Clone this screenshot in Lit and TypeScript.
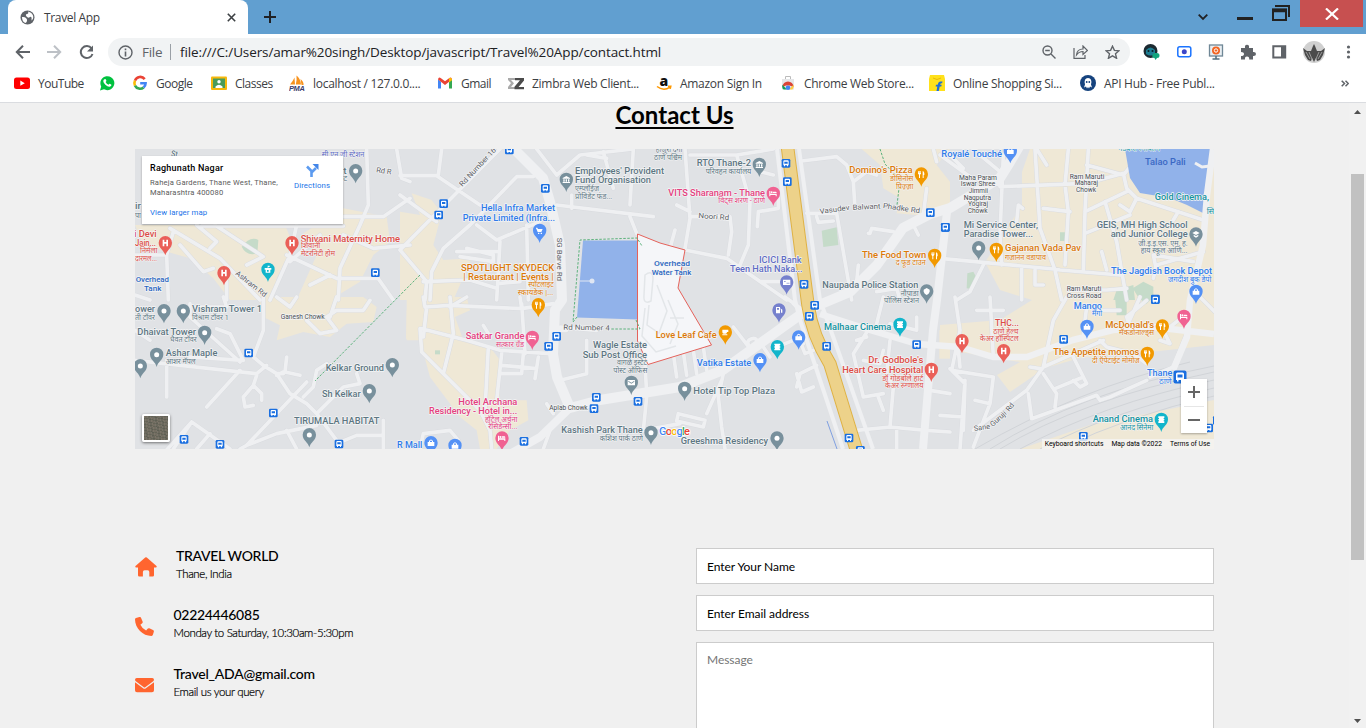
import { LitElement, html, css, svg } from "lit";
import { customElement } from "lit/decorators.js";

type Label = [number, number, string, number, string, number?];
type Pin = [number, number, string, string];
interface Sheet {
  x: number;
  y: number;
  beige?: string;
  green?: string;
  roads: string;
  labels: Label[];
  pins: Pin[];
  stops: [number, number][];
}

const GREY = "#78909c", RED = "#ea5f58", TEAL = "#12b5cb", BLUE = "#5491f5", ORANGE = "#f29900", PINK = "#f06292", VIOLET = "#7580cd";

// Every sheet is surveyed at three units per screen pixel.
const SHEETS: Sheet[] = [
  {
    x: 130, y: 145,
    beige: "M15 240H465L490 300 440 400 430 465H300L250 400 180 340 40 300ZM520 265L640 190 770 215 780 290 730 330 690 410 600 465H500L560 330Z",
    green: "M335 305Q360 272 385 285L382 325Q350 335 335 305Z",
    roads: "M215 243H640M640 215H760L840 160M710 12L715 180 690 240 630 370 625 465M500 240L480 330 420 465M120 250L270 340 390 465M255 240L400 335 350 360M130 260L110 330 115 465M290 410V465M470 330L620 400 740 400M570 270L480 350M15 330H110M640 270L730 310 840 300M150 300L220 380 250 370M800 12L815 100 840 110M730 380L790 465M200 240L260 290 240 310M15 450L60 465M540 420L600 390",
    labels: [
      [122, 34, "St", 20, "g", 8], [12, 275, "i Devi", 68, "r"], [15, 303, "Jain...", 63, "r"],
      [30, 325, "निर्मला", 52, "r s"], [15, 348, "दारमल...", 66, "r s"], [15, 192, "ir", 18, "g"], [15, 218, "पा", 18, "g s"],
      [512, 290, "Shivani Maternity Home", 298, "r"], [513, 309, "शिवानी", 58, "r s"], [513, 333, "मेटरनिटी होम", 102, "r s"],
      [17, 410, "Overhead", 100, "n"], [42, 438, "Tank", 52, "n"], [315, 388, "Ashram Rd", 112, "d", 38], [738, 82, "Rd R", 46, "d", 8],
      [575, 37, "सी.एन.जी स्टेशन", 128, "v s"], [640, 86, "t", 10, "g"], [640, 108, "ट", 12, "g s"],
    ],
    pins: [[106, 330, RED, "H"], [486, 330, RED, "H"], [282, 420, RED, "H"], [414, 410, TEAL, "u"], [677, 114, GREY, "o"]],
    stops: [[736, 383]],
  },
  {
    x: 400, y: 145,
    beige: "M35 145L95 165 125 205 100 300 130 345 215 340 160 465H0V200L60 210Z",
    roads: "M0 92H110L240 180M125 12L115 90M0 150L110 230M300 12L0 315M400 95L350 95 210 240 130 310 95 380 90 465M410 12L470 90M470 90L540 30 700 12M470 180L760 215M690 215L710 265M690 180L700 12M515 150V190M230 240L290 285 420 230M300 290L290 465M380 240L385 465M70 410L210 405 290 430M170 320H290M200 310L280 330V350L180 335M610 20L640 130M0 315L80 410 75 465M560 30L620 40M300 415L360 410",
    labels: [
      [187, 126, "Rd Number 16", 150, "d", -47], [525, 86, "Employees' Provident", 267, "g"], [525, 114, "Fund Organisation", 228, "g"],
      [525, 137, "एम्प्लॉईज", 72, "g s"], [525, 161, "प्रोविडेंट फंड...", 112, "g s"],
      [243, 199, "Hella Infra Market", 222, "b"], [188, 227, "Private Limited (Infra...", 277, "b"],
      [471, 278, "SG Barve Rd", 130, "d", 90], [183, 377, "SPOTLIGHT SKYDECK", 280, "o"], [190, 405, "| Restaurant | Events |", 271, "o"],
      [385, 427, "स्पॉटलाइट", 76, "o s"], [353, 451, "स्कायडेक |...", 107, "o s"],
      [762, 363, "Overhead", 108, "n"], [755, 390, "Water Tank", 119, "n"],
      [767, 22, "हाजूरी दर्गा", 80, "g s"], [762, 44, "ठाणे पश्चिम", 84, "g s"], [805, 152, "VITS Sharanam - Thane", 290, "p"],
    ],
    pins: [[499, 140, GREY, "b"], [419, 293, BLUE, "c"], [415, 516, ORANGE, "f"]],
    stops: [[328, 15], [436, 130], [131, 176], [116, 210]],
  },
  {
    x: 670, y: 145,
    beige: "M575 12H840L800 60 840 110 840 190 740 210 680 205 690 160 640 130 630 60Z",
    green: "M455 257L500 247 505 300 460 306Z",
    roads: "M45 12L60 220 45 310M60 215L180 215 185 260 175 330M45 315L170 340 350 465M210 360L235 300 240 170 200 30 60 30M200 30L310 12M310 90L270 80M325 160V190L265 200 262 245M395 48L500 35 530 60 550 110 555 190M550 110L590 80 620 90M410 205L500 205 545 465M440 215L445 232 490 228M595 265H600L605 250 670 260M270 410H350M560 410L565 360M730 240L745 270M770 130L760 210M790 12L800 50M20 180L60 200M0 310L15 255M620 440L680 430 690 465",
    labels: [
      [80, 62, "RTO Thane-2", 163, "g"], [107, 86, "परिवहन कार्यालय", 137, "g s"], [145, 174, "विट्स शरण - ठाणे", 140, "p s"],
      [85, 219, "Noori Rd", 92, "d", 4], [538, 85, "Domino's Pizza", 190, "o"], [660, 109, "डोमिनोस", 70, "o s"], [678, 131, "पिज़्ज़ा", 52, "o s"],
      [450, 207, "Vasudev", 90, "d", -8], [548, 195, "Balwant", 84, "d", -3], [638, 189, "Phadke Rd", 112, "d", 8],
      [576, 338, "The Food Town", 193, "o"], [677, 361, "द फूड टाउन", 90, "o s"],
      [267, 354, "ICICI Bank", 128, "v"], [180, 382, "Teen Hath Naka...", 218, "v"], [457, 430, "Naupada Police Station", 288, "g"],
      [692, 453, "नौपाडा", 54, "g s"], [642, 475, "पोलिस स्टेशन", 105, "g s"],
    ],
    pins: [[268, 95, GREY, "b"], [310, 182, PINK, "h"], [754, 124, ORANGE, "f"], [794, 368, ORANGE, "f"], [350, 448, VIOLET, "k"], [770, 475, GREY, "p"]],
    stops: [[348, 55], [352, 110], [402, 418], [781, 203], [826, 247]],
  },
  {
    x: 940, y: 145,
    green: "M360 262H378V288H360ZM82 385L100 380 108 395 95 432 80 430ZM578 430L610 410 640 425 640 465H600ZM530 435L580 420 585 465H520Z",
    roads: "M0 340L340 372 360 375 540 390M285 12L300 250 345 375 365 465M385 12L375 120 385 200 375 360M445 12L435 200 430 380M180 125L440 115 550 85M550 85L560 130 590 160 790 225M435 200L560 140M495 170L530 290 560 465M590 160L570 200 540 180M435 265L570 210M130 360L90 440 50 465M230 230L235 180 248 190M190 30L180 270 185 360M245 370V465M440 60L550 90M385 435H500L560 430M285 375V420H310M650 380L640 330 760 350M700 225L715 200M390 200L310 190M600 30L550 90M0 30L90 95 180 120M485 320L500 375M640 400L650 360 790 320M320 60L290 12M20 20L70 70M120 30L180 80",
    labels: [
      [4, 35, "Royalé Touché", 182, "b"], [57, 104, "Maha Param", 114, "k"], [62, 124, "Iswar Shree", 104, "k"], [86, 144, "Jimmii", 58, "k"],
      [71, 164, "Nagputra", 82, "k"], [84, 184, "Yogiraj", 60, "k"], [83, 204, "Chowk", 60, "k"],
      [389, 101, "Ram Maruti", 104, "k"], [404, 120, "Maharaj", 70, "k"], [408, 140, "Chowk", 60, "k"],
      [615, 59, "Talao Pali", 122, "w"], [644, 165, "Gold Cinema,", 163, "t"], [800, 208, "सि", 22, "t s"], [535, 18, "गडकरी रंगायतन", 125, "t s"],
      [71, 249, "Mi Service Center,", 223, "g"], [71, 277, "Paradise Tower...", 208, "g"], [195, 319, "Gajanan Vada Pav", 228, "o"], [195, 344, "गजानन वडापाव", 123, "o s"],
      [470, 249, "GEIS, MH High School", 273, "g"], [512, 277, "and Junior College", 231, "g"], [595, 303, "जी.इ.इ.एस. एम. ह.", 148, "g s"], [602, 325, "हाय स्कूल आणि...", 140, "g s"],
      [513, 388, "The Jagdish Book Depot", 303, "b"], [684, 412, "जगदीश बुक डेपो", 130, "b s"],
      [380, 438, "Ram Maruti", 104, "k"], [380, 458, "Cross Road", 104, "k"],
    ],
    pins: [[211, 54, BLUE, "g"], [116, 345, GREY, "o"], [169, 350, ORANGE, "f"], [768, 304, GREY, "e"], [768, 476, BLUE, "g"]],
    stops: [[16, 247], [646, 462]],
  },
  {
    x: 130, y: 297,
    beige: "M385 0L400 60 450 85 440 130 520 105 600 120 650 80 730 75 740 30 700 0ZM830 40H840V125H828Z",
    roads: "M180 20V60L330 195M280 0L290 30 200 30M400 0L400 100 370 180 400 205 440 230 480 290 530 320 560 350 620 430M15 190L380 230 410 205M110 190V300M180 180L340 190M260 95L300 110 340 190M330 220L230 330M380 235L370 265 340 300 345 330 370 325M370 265L395 290V310M530 255L350 445 330 456M470 180L465 225 510 235M460 230L440 230M460 225L440 235M560 350L640 270 690 260 680 230M520 300L550 270 560 220 590 200M130 456L185 375 300 456M185 375L100 470M240 410L200 456M350 445L440 410 560 385M470 400L500 456M620 440L680 415H760M760 370V456M590 60L620 100 570 110 530 70M590 60L620 40 700 40 720 10M620 0L600 60M440 0L480 30 500 0M15 100L60 130",
    labels: [
      [15, 46, "ower", 60, "g"], [15, 69, "ती टॉवर", 60, "g s"], [186, 46, "Vishram Tower 1", 210, "g"], [186, 69, "विश्राम टॉवर 1", 110, "g s"],
      [22, 113, "Dhaivat Tower", 176, "g"], [120, 136, "धैवत टॉवर", 80, "g s"], [107, 178, "Ashar Maple", 155, "g"], [107, 201, "आशर मॅपल", 90, "g s"],
      [452, 66, "Ganesh Chowk", 132, "k"], [587, 221, "Kelkar Ground", 175, "g"], [576, 299, "Sh Kelkar", 116, "g"], [492, 382, "TIRUMALA HABITAT", 256, "g"],
      [801, 453, "R Mall", 76, "b"],
    ],
    pins: [[102, 78, GREY, "o"], [160, 78, GREY, "o"], [224, 143, GREY, "o"], [80, 209, GREY, "o"], [31, 243, GREY, "o"], [787, 240, GREY, "o"], [718, 318, GREY, "o"], [538, 450, GREY, "o"]],
    stops: [[356, 168], [430, 348], [162, 427], [270, 442], [627, 441]],
  },
  {
    x: 400, y: 297,
    beige: "M20 0H200L210 40 165 60 190 130 270 150 300 190 300 310 380 310 385 370 330 400 290 456H240L230 400 180 360 90 240 60 130 20 130Z",
    green: "M105 160H120V172H105Z",
    roads: "M70 0L75 30 150 25 370 35M150 0L160 110 130 230M65 95L200 130 300 160 450 170M60 95L65 165 240 340 270 400 275 456M250 85L265 110M265 150L255 340M375 170L365 20M305 170L290 310M305 205L410 215M305 230L365 230 370 170M415 180L405 245M480 250L560 230V130M440 320L460 350M470 100H500M360 0L365 35 460 20M60 456L70 410 150 400 175 430M740 300L730 400 840 380M430 456L450 400M735 200L740 290M590 100L480 90M70 120L80 30M150 30L200 0",
    labels: [
      [490, 98, "Rd Number 4", 139, "d", 1], [197, 126, "Satkar Grande", 176, "p"], [288, 150, "सत्कार ग्रँड", 84, "p s"],
      [579, 154, "Wagle Estate", 162, "g"], [548, 182, "Sub Post Office", 193, "g"], [651, 205, "वागळे इस्टेट", 90, "g s"], [640, 228, "पोस्ट ऑफिस", 102, "g s"],
      [175, 323, "Hotel Archana", 177, "p"], [87, 351, "Residency - Hotel in...", 265, "p"], [255, 375, "हॉटेल अर्चना", 97, "p s"], [265, 397, "रेसिडेन्सी...", 87, "p s"],
      [448, 340, "Aplab Chowk", 115, "k"], [484, 407, "Kashish Park Thane", 244, "g"], [599, 431, "कशिश पार्क ठाणे", 130, "g s"],
      [767, 124, "Love Leaf Cafe", 183, "o"],
    ],
    pins: [[397, 158, PINK, "h"], [694, 293, GREY, "l"], [753, 443, GREY, "o"], [306, 460, PINK, "h"], [93, 474, BLUE, "g"], [165, 482, BLUE, "g"]],
    stops: [[470, 118], [446, 148], [589, 301], [582, 335], [714, 313], [372, 433]],
  },
  {
    x: 670, y: 297,
    beige: "M808 100H840V185H808Z",
    roads: "M190 90L240 155M160 230L145 300 155 390 165 456M155 250L110 350M25 350L105 370 100 390 20 372ZM240 155Q225 130 245 125T265 150M320 150L370 130 400 140M385 120L405 170 430 160M380 270L390 230 440 205M380 230L395 285 430 270M560 130L590 120M600 90L550 170 580 300 640 290M580 190L630 200 640 160M660 130L650 230 670 270 660 390M640 0L620 80M740 60V100L660 80M560 400L660 390 770 400M680 400V456M625 300L640 340M780 280L840 290M770 400L840 405M345 0L400 40M370 20L410 60M280 150L300 180M10 170L20 240M40 165L50 235M70 160L80 230M100 150L110 220",
    labels: [
      [80, 206, "Vatika Estate", 164, "b"], [70, 292, "Hotel Tip Top Plaza", 245, "g"], [32, 440, "Greeshma Residency", 262, "g"],
      [462, 100, "Malhaar Cinema", 202, "t"], [595, 199, "Dr. Godbole's", 165, "r"], [517, 227, "Heart Care Hospital", 243, "r"], [637, 251, "डॉ गोडबोले हार्ट", 123, "r s"], [645, 273, "केअर रुग्णालय", 115, "r s"],
    ],
    pins: [[166, 142, ORANGE, "q"], [327, 76, VIOLET, "a"], [386, 157, BLUE, "g"], [322, 186, TEAL, "m"], [270, 225, BLUE, "g"], [44, 311, GREY, "o"], [690, 119, TEAL, "m"], [784, 254, RED, "H"], [321, 460, GREY, "o"]],
    stops: [[434, 25], [418, 58], [470, 148], [740, 143], [537, 423], [571, 460]],
  },
  {
    x: 940, y: 297,
    green: "M525 0H560V55H530ZM590 0H640L620 20Z",
    roads: "M45 0L60 100 35 220 160 240 150 320 100 450M150 0L160 180M110 40H190M60 210L55 160M105 310L150 320M75 250L60 456M30 215L75 260 70 400M380 0L340 70 310 210 260 280 100 400M310 210L490 130M270 210L300 215M310 230L350 290 345 330M265 290L275 365 470 295 480 310 510 300 620 250M400 180L440 260 420 270 400 250M345 275L430 240M600 0L560 90M440 30L430 110M470 40H540M620 10L560 60 570 90M670 100L690 140 660 130M0 355L70 360M480 130L500 150 580 170 620 200M740 50L690 90M780 0L840 60M740 110L700 210 630 240",
    labels: [
      [165, 86, "THC...", 72, "r"], [160, 110, "ठाणे हेल्थ", 75, "r s"], [119, 132, "केअर हॉस्पिटल", 117, "r s"],
      [401, 35, "Mango", 85, "b"], [456, 58, "मँगो", 30, "b s"], [496, 92, "McDonald's", 146, "o"], [537, 115, "मॅकडोनाल्ड्स", 105, "o s"],
      [340, 173, "The Appetite momos", 258, "o"], [456, 197, "दी ऍपेटाईट मोमोज", 143, "o s"],
      [621, 237, "Thane", 76, "b"], [657, 261, "ठाणे", 38, "b s"], [458, 374, "Anand Cinema", 181, "t"], [540, 398, "आनंद सिनेमा", 100, "t s"],
      [103, 402, "Sane", 48, "d", -8], [158, 390, "Guruji", 58, "d", -42], [208, 345, "Rd", 26, "d", -52],
    ],
    pins: [[66, 168, RED, "H"], [191, 198, RED, "H"], [441, 125, BLUE, "g"], [667, 124, ORANGE, "f"], [732, 95, PINK, "h"], [622, 206, ORANGE, "f"], [664, 404, TEAL, "m"]],
    stops: [[646, 8], [371, 127], [430, 418], [806, 393], [832, 370]],
  },
];

const GLYPHS: Record<string, unknown> = {
  o: svg`<circle r="7.5"/>`,
  H: svg`<path d="M-8-10h5v7h6v-7h5v20h-5v-8h-6v8h-5z"/>`,
  f: svg`<path d="M-9-10h2v6h1v-6h2v6h1v-6h2v8l-3 3v10h-3v-10l-3-3zM4-10q5 1 5 7v5h-2v9h-3z"/>`,
  g: svg`<path d="M-10-3h4v-3q6-9 12 0v3h4v12h-20zM-3-3h6v-3q-3-3-6 0z" fill-rule="evenodd"/>`,
  h: svg`<path d="M-12-8h3v8h19v8h-3v-4h-16v4h-3zM-1-6h8q3 0 3 4h-11z"/><circle cx="-5" cy="-4" r="3"/>`,
  m: svg`<path d="M-9-10h18v5h-2v3h2v4h-2v3h2v5h-18v-5h2v-3h-2v-4h2v-3h-2z"/>`,
  b: svg`<path d="M0-11l11 6v2h-22v-2zM-9-1h4v7h-4zM-2-1h4v7h-4zM5-1h4v7h-4zM-11 7h22v3h-22z"/>`,
  c: svg`<path d="M-11-9h4l2 4h14l-4 9h-11l-4-10h-1zM-5 6h4v4h-4zM3 6h4v4h-4z"/>`,
  e: svg`<path d="M-11-4l11-6 11 6-11 6zM-7 1l7 4 7-4v5l-7 4-7-4z"/>`,
  l: svg`<path fill-rule="evenodd" d="M-11-8h22v16h-22zM-9-6l9 6 9-6v3l-9 6-9-6z"/>`,
  k: svg`<path fill-rule="evenodd" d="M-11-8h22v16h-22zM-8-3h5v2h-5zM0 1h3v3h-3zM5 1h3v3h-3z"/>`,
  u: svg`<path fill-rule="evenodd" d="M-1-12h6v4h-4v3h9v5h-3v9h-14v-9h-3v-5h9zM-3 1h5v5h-5z"/>`,
  q: svg`<path d="M-9-8h18v7h-4q0 5-4 5h-6q-4 0-4-5zM-9 6h15v3h-15z"/>`,
  a: svg`<path fill-rule="evenodd" d="M-9-10h12v19h-12zM-6-7v5h6v-5zM4-6l6 4v9h-4v-7z"/>`,
  p: svg`<path d="M0-10l9 5v6q-2 7-9 10-7-3-9-10v-6z"/>`,
};

const pin = ([x, y, fill, glyph]: Pin) => svg`<g transform="translate(${x} ${y - 36})">
  <path fill=${fill} d="M0 37C-3 22-20 16-20-1A20 20 0 0 1 20-1C20 16 3 22 0 37Z"/><g fill="#fff">${GLYPHS[glyph]}</g></g>`;

const stop = ([x, y]: [number, number]) => svg`<g transform="translate(${x} ${y})">
  <rect x="-13" y="-13" width="26" height="26" rx="4" fill="#1a6fe0"/>
  <path fill="#fff" fill-rule="evenodd" d="M-8-6q0-3 3-3h10q3 0 3 3v12h-2v3h-3v-3h-6v3h-3v-3h-2zM-5-5v6h10v-6z"/></g>`;

const label = ([x, y, text, w, cls, turn]: Label) =>
  svg`<text class=${"t " + cls} transform="translate(${x} ${y}) rotate(${turn ?? 0})" textLength=${w} lengthAdjust="spacingAndGlyphs">${text}</text>`;

const at = (s: Sheet) => `translate(${s.x} ${s.y}) scale(.33333)`;

const map = () => svg`
  <rect x="135" y="149" width="1079" height="300" fill="#e0e2e5"/>
  <g fill="#efe8d6">
    ${SHEETS.map((s) => s.beige ? svg`<path transform=${at(s)} d=${s.beige}/>` : null)}
    <path d="M1022 172L1030 149H1214V345L1150 352 1080 358 1045 368 1010 392 997 375 1020 362 960 352 940 345V325L1000 320 1032 300 1000 290 985 262 1000 240 1022 205ZM1020 449L1090 425 1165 410 1214 400V449Z"/>
  </g>
  <g fill="#c5dbc9">${SHEETS.map((s) => s.green ? svg`<path transform=${at(s)} d=${s.green}/>` : null)}</g>
  <g fill="none" stroke="#d1d4d8" stroke-width="1">
    <path d="M1000 449Q1080 400 1214 372M990 449Q1080 392 1214 366M1020 449Q1100 405 1214 380M1040 449Q1110 412 1214 388M975 449Q1080 388 1190 362M1060 449Q1130 415 1214 396"/>
  </g>
  ${SHEETS.map((s) => svg`<path transform=${at(s)} class="casing" d=${s.roads}/>`)}
  ${SHEETS.map((s) => svg`<path transform=${at(s)} class="road" d=${s.roads}/>`)}
  <g fill="#91b2ea">
    <path d="M583 240.500H637L638 319.500 577 317.500Z"/>
    <path d="M1125 149H1212L1203 213 1187 205 1170 198 1140 193 1130 178Z"/>
    <path d="M580 281h10" stroke="#dfe6f3" stroke-width="1"/><circle cx="592" cy="281" r="2.500" fill="#dfe6f3"/>
    <path d="M1195 163L1202 167 1210 166" fill="none" stroke="#eff0f2" stroke-width="3"/>
  </g>
  <g fill="none" stroke="#eff0f2" stroke-linejoin="round">
    <path stroke-width="10" d="M510 145L543 178 550 202 560 245 562 300 555 310 553 354 557 377 570 408 600 400 680 387 723 370 783 327 807 310 850 292 877 265 903 228 930 214 950 208 1000 178 1010 162 1020 145"/>
    <path stroke-width="8" d="M572 406L540 437 508 455M947 212L937 300 933 330 923 449"/>
    <path stroke-width="6.500" d="M820 314L870 330 917 344 960 347 993 357 1027 357 1073 340 1113 330 1153 327 1214 334M1213 149L1207 195 1203 245 1190 300 1187 337 1173 370"/>
    <path stroke-width="4" d="M777 149L795 300 800 320 843 449M799 149L820 300 845 370 873 449"/>
  </g>
  <path d="M787.500 147L808 305Q812 335 830 364L857 452" fill="none" stroke="#dfb244" stroke-width="13.500"/>
  <path d="M787.500 147L808 305Q812 335 830 364L857 452" fill="none" stroke="#edd28a" stroke-width="11.500"/>
  <path d="M637.500 234L660 243 685 250 678 288 685 300 711.500 345 648 364.500 637.500 341Z" fill="#f5f6f9"/>
  <g fill="none" stroke="#e3e6e9" stroke-width="1.500">
    <path d="M645 275q8-6 8 4l-2 22q-8 4-7-6zM657 285l10 26-8 22-12-8 2-20M668 300l10 24-8 20M645 308l-3 28 14 16 20-6M670 318h14"/>
  </g>
  <path d="M637.500 234L660 243 685 250 678 288 685 300 711.500 345 648 364.500 637.500 341Z" fill="none" stroke="#e5625b" stroke-width="1"/>
  <g fill="none" stroke="#5cb27c" stroke-width="1" stroke-dasharray="2.500 1.500">
    <path d="M577 317L573 322 580 240 637 238 642 246M636 320L640 329H610M420 275L315 381M880 149L885 164 900 180 897 205"/>
  </g>
  <path d="M827 421L837 449" stroke="#7f9fe0"/>
  ${SHEETS.map((s) => svg`<g transform=${at(s)}>${s.stops.map(stop)}${s.labels.map(label)}${s.pins.map(pin)}</g>`)}
  <g transform="translate(1180 377) scale(.5)">${stop([0, 0])}</g>
  <text x="659" y="435" class="logo" textLength="31"><tspan fill="#4285f4">G</tspan><tspan fill="#ea4335">o</tspan><tspan fill="#fbbc04">o</tspan><tspan fill="#4285f4">g</tspan><tspan fill="#34a853">l</tspan><tspan fill="#ea4335">e</tspan></text>`;

const icon = (w: number, h: number, body: unknown, box = `0 0 ${w} ${h}`) =>
  html`<svg width=${w} height=${h} viewBox=${box} fill="none">${body}</svg>`;

const BOOKMARKS: [string, number, unknown][] = [
  ["YouTube", 45, svg`<rect y="2.500" width="16" height="11.500" rx="2.500" fill="#f00"/><path d="M6.300 5.600v5.200l4.500-2.600z" fill="#fff"/>`],
  ["", 0, svg`<path d="M1 15.500l1.200-4A7 7 0 1 1 5 14.300z" fill="#00c13f"/><path d="M5 4.600q1.400-1.300 2 .2l.4 1q.1.500-.8 1.300 1 2 2.900 2.700.9-1.200 1.300-1l1.600.9q.3 1.700-1.800 2.100-2 .2-4.200-2T4.300 6.300Q4.300 5.300 5 4.600z" fill="#fff"/>`],
  ["Google", 39, svg`<g stroke-width="2.600"><path d="M12.700 4.100A5.600 5.600 0 0 0 3 5.600" stroke="#ea4335"/><path d="M3 5.600a5.600 5.600 0 0 0 0 5" stroke="#fbbc04"/><path d="M3 10.600a5.600 5.600 0 0 0 8.600 1.800" stroke="#34a853"/><path d="M11.600 12.400a5.600 5.600 0 0 0 2-4.200H8.200" stroke="#4285f4"/></g>`],
  ["Classes", 38, svg`<rect y="1.500" width="16" height="13.500" rx="1" fill="#f6b80c"/><rect x="2" y="3.500" width="12" height="9.500" fill="#4a9b5a"/><circle cx="8" cy="6.800" r="1.700" fill="#fff"/><path d="M4.500 11.500q3.500-3.500 7 0v1.500h-7z" fill="#fff"/>`],
  ["localhost / 127.0.0....", 108, svg`<path d="M1 9.500Q4 6 5.500 2.500L6 9.500zM6.800 9.500Q8 5 7.500 .5q4 3 4.500 9zM11.500 4q3.500 3 3 6h-2z" fill="#f7931e"/><text x="0" y="15.500" font-family="Liberation Sans" font-size="6.500" font-weight="700" font-style="italic" fill="#3a3d6b" textLength="15.500" lengthAdjust="spacingAndGlyphs">PMA</text>`],
  ["Gmail", 31, svg`<path d="M1 13.500V4.500l3 2.300v6.700z" fill="#4285f4"/><path d="M15 13.500V4.500l-3 2.300v6.700z" fill="#34a853"/><path d="M1 4.500Q1.500 1.500 4 3.200L8 6.300l4-3.100q2.500-1.700 3 1.300L8 10z" fill="#ea4335"/><path d="M12 3.200q3-1.700 3 2L12 7.400z" fill="#fbbc04"/>`],
  ["Zimbra Web Client...", 108, svg`<path d="M0 3h7v2H3l3 3.200L3 12h4v2H0v-2l3-4-3-3z" fill="#aaa"/><path d="M7 3h9v2.400L10.600 12H16v2.200H6.500v-2.500L12 5.300H7z" fill="#4b4b4b"/>`],
  ["Amazon Sign In", 84, svg`<text x="3.500" y="10.500" font-family="Open Sans" font-weight="800" font-size="14" fill="#111">a</text><path d="M1 11.500q6.500 5 13 .6M12 11.200h2.800l-.6 2.600" stroke="#f90" stroke-width="1.500"/>`],
  ["Chrome Web Store...", 109, svg`<path d="M5.500 4V1.500h5V4" stroke="#bbb"/><path d="M2 4h12v10.500H2z" fill="#e5e6e8"/><path d="M2.500 12a5.500 5.500 0 0 1 11 0l-4-1.500H6z" fill="#db4437"/><path d="M2.500 9.800q-.8 4 1.300 4.700h3z" fill="#0f9d58"/><path d="M13.500 9.800q.8 3-1 4.700H9z" fill="#ffcd40"/><circle cx="8" cy="12.700" r="2.300" fill="#4285f4"/>`],
  ["Online Shopping Si...", 111, svg`<path d="M1 0h14l1 4v12H0V4z" fill="#ffe11b"/><path d="M4 3q4 3 8 0" stroke="#e8b90c"/><path d="M13.500 6.500h-2q-2 0-2.500 2.200l-.3 1H7l-.4 1.800h1.700L7.500 16h2.300l.9-4.500h1.600l.4-1.800h-1.600q.2-1.500 1-1.500h1z" fill="#1e6fd9"/>`],
  ["API Hub - Free Publ...", 112, svg`<circle cx="8" cy="8" r="8" fill="#16437e"/><path d="M4 12.500l1-3q-1.500-6.500 3-6.500t3 6.500l1 3-2-1-1 2-1-1.500L7 13.500l-1-2z" fill="#fff"/><circle cx="6.700" cy="7" r=".9" fill="#16437e"/><circle cx="9.300" cy="7" r=".9" fill="#16437e"/>`],
];

const CONTACTS: [string, string, string, unknown][] = [
  ["home", "TRAVEL WORLD", "Thane, India", icon(22, 20, svg`<path fill="#ff652f" d="M10.200.5Q11 0 11.800.5l9.700 8.600q.7 1.200-.6 1.400H19v7.700q0 1.300-1.300 1.300h-3.400v-4.600q0-1.600-1.600-1.600H9.500q-1.600 0-1.600 1.600v4.600H4.300Q3 19.500 3 18.200v-7.700H1.100Q-.2 10.300.5 9.100z"/>`)],
  ["phone", "02224446085", "Monday to Saturday, 10:30am-5:30pm", icon(19, 19, svg`<path fill="#ff652f" d="M6.100.9l1.500 3.700q.4 1-.4 1.700L5.400 7.800q1.800 3.900 5.700 5.800l1.500-1.900q.7-.8 1.700-.4l3.700 1.600q1 .5.9 1.500l-1 3.400q-.3 1-1.300 1.100C8 19 0 11.500 0 2.200Q0 1.200 1 .9L4.400 0Q5.600-.2 6.100.9z"/>`)],
  ["mail", "Travel_ADA@gmail.com", "Email us your query", icon(19, 15, svg`<path fill="#ff652f" d="M1.800 0h15.400Q19 0 19 1.800q0 .8-.8 1.400l-8 6q-.7.500-1.400 0l-8-6Q0 2.600 0 1.800 0 0 1.800 0zM0 4.300l8.100 6q1.400 1 2.800 0l8.100-6v8q0 2-2 2H2q-2 0-2-2z"/>`)],
];

@customElement("app-root")
export class AppRoot extends LitElement {
  static styles = css`
    :host { display: block; width: 1366px; height: 728px; overflow: hidden; background: #f0f0f0; font-family: Lato, sans-serif; }
    * { box-sizing: border-box; }
    svg { display: block; flex: none; }
    .browser { height: 103px; background: #fff; border-bottom: 1px solid #dadce0; font-family: "Open Sans", "Noto Sans", sans-serif; color: #3c4043; }
    .strip { height: 34px; background: #619fd0; display: flex; padding-left: 8px; }
    .strip > div { flex: none; }
    .tab { width: 240px; height: 34px; background: #fff; border-radius: 8px 8px 0 0; display: flex; align-items: center; padding: 0 12px; font-size: 12px; letter-spacing: -0.35px; }
    .tab span { flex: 1; margin-left: 9px; }
    .plus { margin: 11px 0 0 16px; }
    .chev { margin: 14px 0 0 922px; }
    .min { width: 16px; height: 3px; background: #222; margin: 17px 0 0 29px; }
    .max { margin: 5px 0 0 19px; }
    .close { width: 63px; height: 27px; background: #c75050; margin-left: 10px; display: flex; align-items: center; justify-content: center; }
    .bar { height: 36px; display: flex; align-items: center; padding-left: 15px; }
    .bar > svg { margin-right: 17px; }
    .omni { width: 1022px; height: 28px; border-radius: 14px; background: #f1f3f4; display: flex; align-items: center; padding: 0 10px; margin-left: -3px; font-size: 13.5px; line-height: 26px; }
    .omni span { margin-top: -1px; }
    .omni .file { width: 22px; margin-left: 9px; color: #5f6368; letter-spacing: -0.3px; }
    .omni .sep { width: 1px; height: 16px; background: #9aa0a6; margin: 0 9px 0 6px; }
    .omni .url { flex: 1; color: #202124; letter-spacing: -0.11px; }
    .omni svg + svg { margin-left: 17px; }
    .ext { display: flex; align-items: center; gap: 16px; margin-left: 13px; }
    .marks { height: 30px; display: flex; align-items: center; gap: 16px; padding-left: 14px; font-size: 12px; letter-spacing: -0.29px; white-space: nowrap; margin-top: -2px; }
    .mark { display: flex; gap: 8px; align-items: center; }
    .mark span { white-space: nowrap; }
    .mark.tight { letter-spacing: -0.5px; }
    .mark.bare { margin-right: 1px; margin-left: 0; }
    .more { margin-left: 109px; }
    .view { display: flex; height: 625px; }
    .page { width: 1349px; padding: 0 135px; }
    h1 { margin: -4px 0 0; height: 50px; line-height: 32px; font-size: 24px; font-weight: 700; text-align: center; text-decoration: underline; text-decoration-thickness: 2px; text-underline-offset: 3px; }
    .map { position: relative; height: 300px; width: 1079px; overflow: hidden; }
    .card { position: absolute; left: 7px; top: 7px; width: 201px; height: 68px; background: #fff; box-shadow: 0 1px 2px rgba(0,0,0,.3); padding: 6px 8px; font-family: Roboto, sans-serif; display: flex; }
    .card .info { width: 144px; font-size: 7.6px; line-height: 10px; letter-spacing: .17px; color: #5b5b5b; white-space: nowrap; }
    .card b { display: block; font-size: 9px; line-height: 12px; font-weight: 500; color: #000; margin-bottom: 4px; letter-spacing: .22px; }
    .card .blue { color: #1a73e8; }
    .card .larger { margin-top: 10px; letter-spacing: .08px; font-size: 7.8px; }
    .card .dir { width: 36px; display: flex; flex-direction: column; align-items: center; gap: 4px; font-size: 7.8px; padding-top: 2px; letter-spacing: .1px; }
    .zoom { position: absolute; right: 7px; top: 230px; width: 26px; height: 54px; background: #fff; box-shadow: 0 1px 2px rgba(0,0,0,.3); }
    .sat { position: absolute; left: 7px; top: 265px; width: 28px; height: 28px; border: 2px solid #fff; border-radius: 2px; background: repeating-linear-gradient(12deg, rgba(90,95,80,.35) 0 1px, rgba(140,130,115,.25) 1px 3px), repeating-linear-gradient(78deg, #6a665b 0 2px, #716f65 2px 3px, #605f55 3px 5px, #757064 5px 6px); box-shadow: 0 1px 3px rgba(0,0,0,.5); }
    .legal { position: absolute; right: 0; bottom: 0; height: 10px; background: rgba(245,245,245,.75); font: 6.8px/10px Roboto, sans-serif; letter-spacing: -.02px; color: #000; display: flex; gap: 8px; padding: 0 4px 0 3px; }
    .t { font: 500 26px Roboto, "Noto Sans Devanagari", sans-serif; paint-order: stroke; stroke: #f4f5f6; stroke-width: 4px; stroke-linejoin: round; fill: #12929f; }
    .t.s { font-size: 22px; font-weight: 400; stroke-width: 3px; }
    .t.g { fill: #5d7682; }
    .t.r { fill: #dd4c45; }
    .t.n { fill: #2a66c0; font-size: 23px; }
    .t.v { fill: #5f6cc4; }
    .t.b { fill: #2f7bea; }
    .t.o { fill: #dc7908; }
    .t.p { fill: #e5407e; }
    .t.w { fill: #3a68c4; stroke: none; }
    .t.k { font-size: 19px; fill: #4a4e52; font-weight: 400; }
    .t.d { font-size: 22px; font-weight: 400; fill: #5c6065; }
    .road { fill: none; stroke: #eff0f2; stroke-width: 11px; stroke-linejoin: round; stroke-linecap: round; }
    .casing { fill: none; stroke: #d9dbdf; stroke-width: 13.5px; stroke-linejoin: round; stroke-linecap: round; }
    .logo { font: 500 11px Roboto, sans-serif; paint-order: stroke; stroke: #fff; stroke-width: 1.5px; }
    .below { display: flex; justify-content: space-between; margin-top: 99px; width: 1079px; }
    .contacts { display: flex; flex-direction: column; }
    .contact { height: 59px; display: flex; }
    .contact > svg { margin: 10px 19.5px 0 0; }
    .contact.home > svg { margin: 9px 19px 0 0; }
    .contact.mail > svg { margin-top: 12px; }
    .contact h5 { margin: -1px 0 0; font-size: 14px; line-height: 17px; font-weight: 500; letter-spacing: -.3px; color: #000; white-space: nowrap; }
    .contact.mail h5 { letter-spacing: -.24px; }
    .contact p { margin: 2px 0 0; font-size: 11.5px; line-height: 15px; font-weight: 300; letter-spacing: -.37px; color: #000; -webkit-text-stroke: .2px #000; }
    .form { width: 518px; display: flex; flex-direction: column; gap: 11px; }
    .field { height: 36px; border: 1px solid #ccc; background: #fff; padding: 0 10px; line-height: 36px; font-size: 12px; letter-spacing: -.04px; color: #000; }
    .field.area { height: 110px; line-height: 34px; color: #757575; }
    .scroll { width: 17px; background: #f1f1f1; display: flex; flex-direction: column; align-items: center; padding: 7px 1px 5px 1px; }
    .thumb { width: 13px; height: 386px; background: #c1c1c1; margin-top: 60px; margin-bottom: auto; }
  `;

  render() {
    return html`
      <header class="browser">
        <div class="strip">
          <div class="tab">
            ${icon(15, 15, svg`<circle cx="7.500" cy="7.500" r="7" fill="#5f6368"/><path d="M2 7q2.500-.5 4 1t1 3-1.500 2Q2 12 2 7zM8 1.500q1 2-1 2.500T6.500 6.500 10 7t1.500 3.500q2.500-2 1.500-5T8 1.500z" fill="#fff"/>`)}
            <span>Travel App</span>
            ${icon(9, 9, svg`<path d="M.8.800l7.400 7.400M8.200.800L.8 8.200" stroke="#3c4043" stroke-width="1.600"/>`)}
          </div>
          <div class="plus">${icon(12, 12, svg`<path d="M6 0v12M0 6h12" stroke="#202124" stroke-width="2"/>`)}</div>
          <div class="chev">${icon(10, 7, svg`<path d="M.7.700L5 5 9.300.700" stroke="#202124" stroke-width="1.800"/>`)}</div>
          <div class="min"></div>
          <div class="max">${icon(18, 16, svg`<path d="M3 1h14v11" stroke="#222" stroke-width="2"/><path d="M1 4.500h13V15H1z" stroke="#222" stroke-width="2"/><path d="M0 5.500h15" stroke="#222" stroke-width="3.500"/>`)}</div>
          <div class="close">${icon(14, 12, svg`<path d="M1 .5l12 11M13 .5l-12 11" stroke="#fff" stroke-width="2.200"/>`)}</div>
        </div>
        <div class="bar">
          ${icon(15, 14, svg`<path d="M15 7H2M8 .8L1.800 7 8 13.200" stroke="#5f6368" stroke-width="2"/>`)}
          ${icon(15, 14, svg`<path d="M0 7h13M7 .8L13.200 7 7 13.200" stroke="#bdc1c6" stroke-width="2"/>`)}
          ${icon(15, 15, svg`<path d="M12.600 3.400A6 6 0 1 0 13.500 9" stroke="#5f6368" stroke-width="2"/><path d="M14 .5V6.500H8z" fill="#5f6368"/>`)}
          <div class="omni">
            ${icon(15, 15, svg`<circle cx="7.500" cy="7.500" r="6.500" stroke="#5f6368" stroke-width="1.400"/><path d="M7.500 6.500v5M7.500 3.500v1.700" stroke="#5f6368" stroke-width="1.600"/>`)}
            <span class="file">File</span><span class="sep"></span>
            <span class="url">file:///C:/Users/amar%20singh/Desktop/javascript/Travel%20App/contact.html</span>
            ${icon(14, 14, svg`<circle cx="5.500" cy="5.500" r="4.500" stroke="#5f6368" stroke-width="1.400"/><path d="M3.200 5.500h4.600M9 9l4.500 4.500" stroke="#5f6368" stroke-width="1.400"/>`)}
            ${icon(15, 14, svg`<path d="M1 3v10.300h11V10" stroke="#5f6368" stroke-width="1.200"/><path d="M3.500 10Q4 4 10 4V1l4.500 4.500L10 9.500v-3Q6 6.500 3.500 10z" stroke="#5f6368" stroke-width="1.200"/>`)}
            ${icon(15, 14, svg`<path d="M7.500 1.200l1.900 4.200 4.600.4-3.500 3 1.100 4.500-4.100-2.400-4.100 2.400 1.100-4.500L1 5.800l4.600-.4z" stroke="#5f6368" stroke-width="1.400"/>`)}
          </div>
          <div class="ext">
            ${icon(18, 16, svg`<circle cx="7.500" cy="7" r="7" fill="#1c2a31"/><path d="M3 6q4.500-5 9 0v4q-4 3-9 0z" fill="#1d7d92"/><circle cx="5.500" cy="7" r="1" fill="#0d1f26"/><circle cx="9.500" cy="7" r="1" fill="#0d1f26"/><path d="M12 9h2q2.500 0 2.500 2.500T14 14l-1.500 2-1-2Q9 14 9.300 11.500T12 9z" fill="#12a47c"/>`)}
            ${icon(15, 12, svg`<rect x=".8" y=".8" width="13" height="10" rx="2" stroke="#1a73ff" stroke-width="1.500"/><circle cx="7.300" cy="5.800" r="2.500" fill="#3c46c8"/>`)}
            ${icon(16, 16, svg`<rect x="1.500" y="1" width="13" height="11" fill="#e8eef2" stroke="#6f8796" stroke-width="1.300"/><circle cx="8" cy="6.500" r="4" fill="#f26522"/><circle cx="8" cy="6.500" r="1.700" stroke="#fff"/><path d="M8 12v2.500M4.500 15h7" stroke="#55707f" stroke-width="1.600"/>`)}
            ${icon(16, 16, svg`<path d="M1 4h4Q4.500.8 7 .8T9 4h4v4q3-.3 3 2t-3 2v3.500H9.200Q9.500 12.500 7 12.500T5 15.500H1V12q3 0 3-2T1 8z" fill="#5f6368"/>`)}
            ${icon(15, 14, svg`<path d="M1.300 1.300h11.900v11.200H1.300z" stroke="#5f6368" stroke-width="2"/><path d="M9 1h4.500v12H9z" fill="#5f6368"/>`)}
            ${icon(22, 22, svg`<circle cx="11" cy="11" r="11" fill="#d0d0d0"/><path d="M0 7l4 3 4 0 2-5 1-2 1 2 2 5 4 0 4-3-2 7-3 5-3 1-1-3-2 4-2-4-1 3-3-1-3-5z" fill="#4b4b4b"/><path d="M3 11l4 7M6 11l3 7M19 11l-4 7M16 11l-3 7" stroke="#bbb" stroke-width=".7"/>`)}
            ${icon(16, 14, svg`<circle cx="7.500" cy="2" r="1.600" fill="#5f6368"/><circle cx="7.500" cy="7" r="1.600" fill="#5f6368"/><circle cx="7.500" cy="12" r="1.600" fill="#5f6368"/>`)}
          </div>
        </div>
        <div class="marks">
          ${BOOKMARKS.map(([name, w, art]) => name
            ? html`<div class="mark ${w < 50 ? "tight" : ""}">${icon(16, 16, art)}<span style="width:${w}px">${name}</span></div>`
            : html`<div class="mark bare">${icon(16, 16, art)}</div>`)}
          <div class="more">${icon(8, 7, svg`<path d="M.7.700L3.500 3.500.7 6.300M4.500.700L7.300 3.500 4.500 6.300" stroke="#5f6368" stroke-width="1.500"/>`)}</div>
        </div>
      </header>
      <div class="view">
        <main class="page">
          <h1>Contact Us</h1>
          <section class="map">
            <svg width="1079" height="300" viewBox="135 149 1079 300">${map()}</svg>
            <div class="card">
              <div class="info"><b>Raghunath Nagar</b>Raheja Gardens, Thane West, Thane,<br />Maharashtra 400080<div class="blue larger">View larger map</div></div>
              <div class="dir blue">${icon(13, 13, svg`<path d="M5.500 13V7L1 2.500M5.500 8.500L10 4" stroke="#5c9bf0" stroke-width="2.600"/><path d="M6.500 0H12.500V6z" fill="#4285e8"/>`)}<span>Directions</span></div>
            </div>
            <div class="sat"></div>
            <div class="zoom">${icon(26, 54, svg`<path d="M7 13h12M13 7v12M7 41h12" stroke="#666" stroke-width="2"/><path d="M3 27.500h20" stroke="#e6e6e6"/>`)}</div>
            <div class="legal"><span>Keyboard shortcuts</span><span>Map data ©2022</span><span>Terms of Use</span></div>
          </section>
          <section class="below">
            <div class="contacts">
              ${CONTACTS.map(([kind, title, sub, art]) => html`<div class="contact ${kind}">${art}<div><h5>${title}</h5><p>${sub}</p></div></div>`)}
            </div>
            <div class="form">
              <div class="field">Enter Your Name</div>
              <div class="field">Enter Email address</div>
              <div class="field area">Message</div>
            </div>
          </section>
        </main>
        <div class="scroll">
          ${icon(7, 4, svg`<path d="M0 4L3.500 0 7 4z" fill="#505050"/>`)}
          <div class="thumb"></div>
          ${icon(7, 4, svg`<path d="M0 0L3.500 4 7 0z" fill="#505050"/>`)}
        </div>
      </div>`;
  }
}
